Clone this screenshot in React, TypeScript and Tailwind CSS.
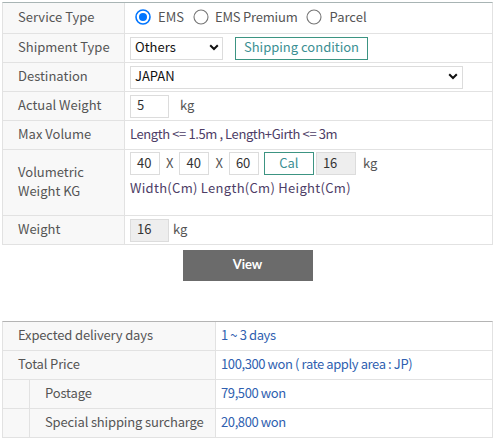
import React from "react";

const font = { fontFamily: '"Noto Sans CJK KR", "Noto Sans", sans-serif' };

function Chevron() {
  return (
    <svg width="10" height="7" viewBox="0 0 10 7">
      <path d="M1.2 1.2 L5 5 L8.8 1.2" fill="none" stroke="#111" strokeWidth="2" />
    </svg>
  );
}

function Radio({ checked }: { checked?: boolean }) {
  return (
    <svg width="16" height="16" viewBox="0 0 16 16" className="shrink-0">
      {checked ? (
        <>
          <circle cx="8" cy="8" r="7" fill="#fff" stroke="#0075ff" strokeWidth="1.6" />
          <circle cx="8" cy="8" r="4" fill="#0075ff" />
        </>
      ) : (
        <circle cx="8" cy="8" r="7" fill="#fff" stroke="#767676" strokeWidth="1.1" />
      )}
    </svg>
  );
}

function Box({ v, w, gray }: { v: string; w: string; gray?: boolean }) {
  return (
    <div
      className={`${w} h-[23px] border border-[#dcdcdc] flex items-center pl-[6px] pb-[2px] text-[13px] text-[#333] ${
        gray ? "bg-[#eeeeee]" : "bg-white"
      }`}
    >
      {v}
    </div>
  );
}

function Row({
  label,
  h,
  children,
}: {
  label: React.ReactNode;
  h: string;
  children: React.ReactNode;
}) {
  return (
    <div className={`flex ${h} border-b border-[#e2e2e2]`}>
      <div className="w-[122px] shrink-0 bg-[#f8f8f8] border-r border-[#e2e2e2] flex items-center pl-[15px] pb-[3px] text-[13px] text-[#555] leading-[19px]">
        {label}
      </div>
      <div className="flex-1 flex items-center pl-[5px] text-[13px] text-[#555]">{children}</div>
    </div>
  );
}

function ResRow({
  label,
  value,
  sub,
}: {
  label: string;
  value: string;
  sub?: boolean;
}) {
  return (
    <div className="flex h-[29px] border-b border-[#e2e2e2]">
      {sub && <div className="w-[27px] shrink-0 bg-[#f8f8f8] border-r border-[#e2e2e2]" />}
      <div
        className={`${
          sub ? "w-[186px] pl-[15px]" : "w-[213px] pl-[15px]"
        } shrink-0 bg-[#f8f8f8] border-r border-[#e2e2e2] flex items-center pb-[2px] text-[13px] text-[#555] tracking-[-0.15px]`}
      >
        {label}
      </div>
      <div className="flex-1 flex items-center pl-[5px] pb-[2px] text-[13px] text-[#2f5fb0] tracking-[-0.4px]">
        {value}
      </div>
    </div>
  );
}

export default function App() {
  return (
    <div className="bg-white w-[502px] h-[446px] pl-[2px] pt-[2px]" style={font}>
      <div className="w-[491px] border-t border-t-[#a8b4b4] border-x border-x-[#e2e2e2]">
        <Row label="Service Type" h="h-[31px]">
          <div className="flex items-center pl-[5px] pb-[2px]">
            <Radio checked />
            <span className="ml-[7px] pb-[1px]">EMS</span>
            <span className="ml-[9px]"><Radio /></span>
            <span className="ml-[6px] pb-[1px] tracking-[-0.2px]">EMS Premium</span>
            <span className="ml-[8px]"><Radio /></span>
            <span className="ml-[8px] pb-[1px]">Parcel</span>
          </div>
        </Row>
        <Row label="Shipment Type" h="h-[29px]">
          <div className="w-[93px] h-[23px] border border-[#dcdcdc] bg-white flex items-center justify-between pl-[4px] pr-[3px] pb-[2px] text-[13px] text-[#111]">
            <span>Others</span>
            <Chevron />
          </div>
          <div className="ml-[12px] w-[133px] h-[23px] border border-[#3c9482] flex items-center justify-center pb-[2px] text-[13px] text-[#3b8f93]">
            Shipping condition
          </div>
        </Row>
        <Row label="Destination" h="h-[29px]">
          <div className="w-[333px] h-[23px] border border-[#dcdcdc] bg-white flex items-center justify-between pl-[4px] pr-[4px] pb-[2px] text-[13px] text-[#111]">
            <span>JAPAN</span>
            <Chevron />
          </div>
        </Row>
        <Row label="Actual Weight" h="h-[29px]">
          <Box v="5" w="w-[39px]" />
          <span className="ml-[11px] pb-[2px]">kg</span>
        </Row>
        <Row label="Max Volume" h="h-[29px]">
          <span className="text-[#4d3d66] pb-[3px] tracking-[-0.4px]">
            Length &lt;= 1.5m , Length+Girth &lt;= 3m
          </span>
        </Row>
        <Row
          label={
            <span>
              Volumetric
              <br />
              Weight KG
            </span>
          }
          h="h-[66px]"
        >
          <div className="flex flex-col self-start pt-[2px]">
            <div className="flex items-center">
              <Box v="40" w="w-[30px]" />
              <span className="mx-[6px] pb-[2px]">X</span>
              <Box v="40" w="w-[30px]" />
              <span className="mx-[6px] pb-[2px]">X</span>
              <Box v="60" w="w-[30px]" />
              <div className="ml-[5px] w-[50px] h-[23px] border border-[#3c9482] flex items-center justify-center pb-[2px] text-[13px] text-[#3b8f93]">
                Cal
              </div>
              <div className="ml-[2px]">
                <Box v="16" w="w-[40px]" gray />
              </div>
              <span className="ml-[7px] pb-[2px]">kg</span>
            </div>
            <div className="mt-[3px] text-[#4d3d66] tracking-[0.3px]">Width(Cm) Length(Cm) Height(Cm)</div>
          </div>
        </Row>
        <Row label="Weight" h="h-[29px]">
          <Box v="16" w="w-[39px]" gray />
          <span className="ml-[4px] pb-[2px]">kg</span>
        </Row>
      </div>

      <div className="w-[491px] flex justify-center mt-[5px]">
        <div
          className="w-[130px] h-[31px] bg-[#6b6b6b] flex items-center justify-center pb-[2px] text-white text-[13px] font-bold"
          style={{ fontFamily: "Lato, sans-serif" }}
        >
          View
        </div>
      </div>

      <div className="w-[491px] mt-[40px] border-t border-t-[#b4b4b4] border-x border-x-[#e2e2e2]">
        <ResRow label="Expected delivery days" value="1 ~ 3 days" />
        <ResRow label="Total Price" value="100,300 won ( rate apply area : JP)" />
        <ResRow label="Postage" value="79,500 won" sub />
        <ResRow label="Special shipping surcharge" value="20,800 won" sub />
      </div>
    </div>
  );
}
